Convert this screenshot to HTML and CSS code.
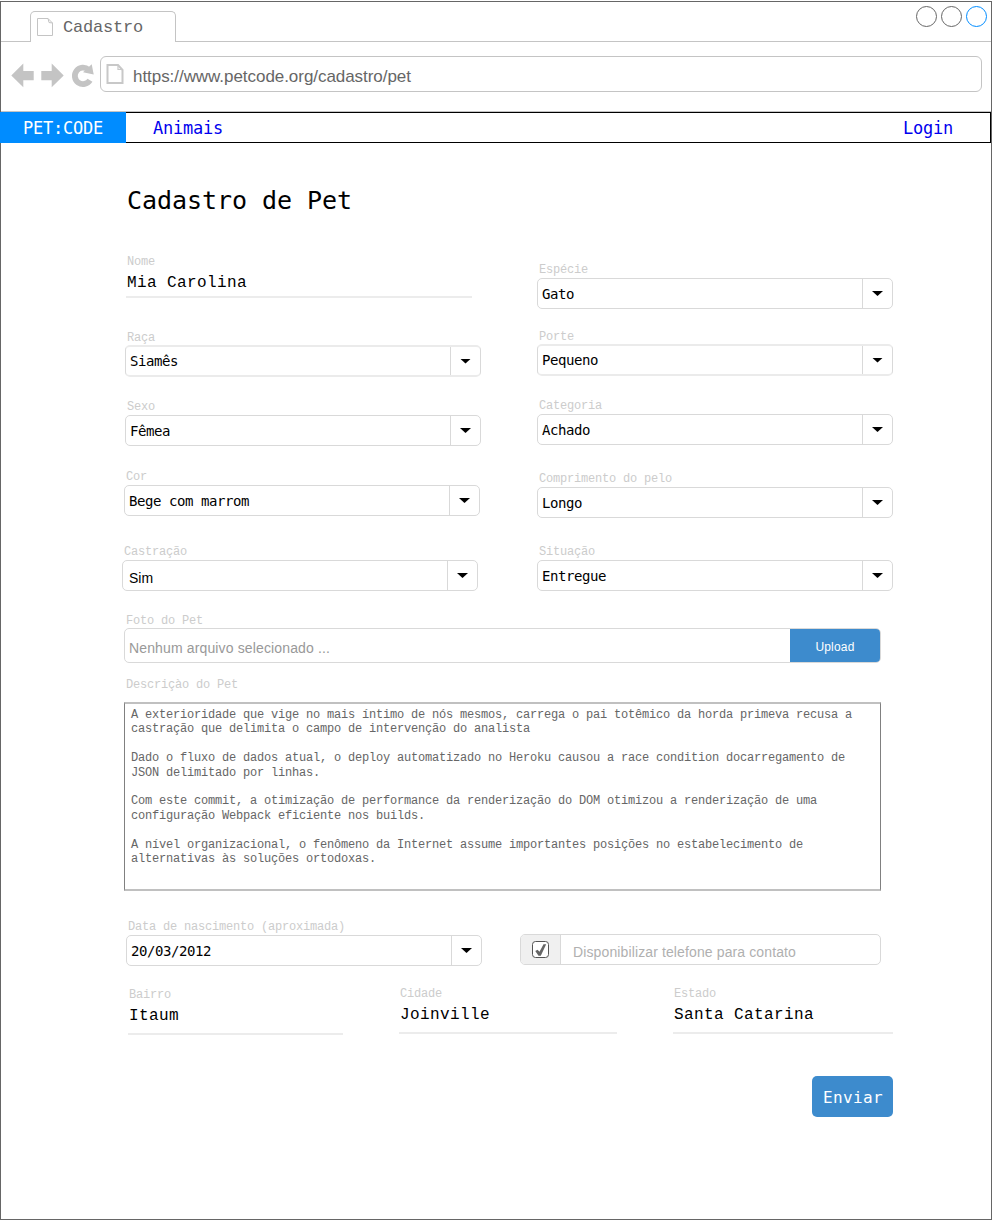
FILE: index.html
```html
<!DOCTYPE html>
<html lang="pt-BR">
<head>
<meta charset="utf-8">
<title>Cadastro</title>
<link rel="stylesheet" href="styles.css">
</head>
<body>
<div class="window">
  <div class="tabbar">
    <div class="tab">
      <svg class="tab-icon" width="18" height="20" viewBox="0 0 18 20"><path d="M1.5 1.5H12L16.500 6V18.500H1.500ZM12 1.500L13 5.500L16.500 6" fill="none" stroke="#c4c4c4"/></svg>
      <span>Cadastro</span>
    </div>
    <svg class="controls" width="76" height="22" viewBox="0 0 76 22" fill="none" stroke="#666">
      <circle cx="11.500" cy="11.500" r="10"/><circle cx="36.500" cy="11.500" r="10"/><circle cx="61.500" cy="11.500" r="10" stroke="#008cff"/>
    </svg>
  </div>
  <div class="toolbar">
    <svg class="nav-icons" width="90" height="28" viewBox="0 0 90 28">
      <path d="M1.300 14.400L13.300 2.400V10H23.700V19.300H13.300V26.300ZM53.700 14.400L41.700 2.400V10H31.300V19.300H41.700V26.300Z" fill="#c4c4c4"/>
      <path d="M80 19.200A8.200 8.200 0 1 1 78.500 8.700" fill="none" stroke="#c4c4c4" stroke-width="5.800"/>
      <path d="M81.700 3.300L83.700 13.400L73 11.200Z" fill="#c4c4c4"/>
    </svg>
    <div class="address">
      <svg width="20" height="22" viewBox="0 0 20 22"><path d="M1.500 2H12L16.500 7V20H1.500Z" fill="none" stroke="#c8c8c8" stroke-width="2"/><path d="M12 2V6.500H16.500" fill="none" stroke="#c8c8c8" stroke-width="1.200"/></svg>
      <span>https://www.petcode.org/cadastro/pet</span>
    </div>
  </div>
  <nav class="navbar">
    <a class="brand">PET:CODE</a>
    <a class="link">Animais</a>
    <a class="link login">Login</a>
  </nav>
  <main class="page">
    <h1 class="title">Cadastro de Pet</h1>
    <div class="columns">
      <div class="column">
        <div class="text-field name"><label>Nome</label><span class="value">Mia Carolina</span></div>
        <div class="field raca"><label>Raça</label><div class="select soft"><span>Siamês</span><i class="arrow"></i></div></div>
        <div class="field sexo"><label>Sexo</label><div class="select"><span>Fêmea</span><i class="arrow"></i></div></div>
        <div class="field cor"><label>Cor</label><div class="select"><span>Bege com marrom</span><i class="arrow"></i></div></div>
        <div class="field castracao"><label>Castração</label><div class="select"><span class="sans">Sim</span><i class="arrow"></i></div></div>
      </div>
      <div class="column right">
        <div class="field especie"><label>Espécie</label><div class="select"><span>Gato</span><i class="arrow"></i></div></div>
        <div class="field porte"><label>Porte</label><div class="select soft"><span>Pequeno</span><i class="arrow"></i></div></div>
        <div class="field categoria"><label>Categoria</label><div class="select"><span>Achado</span><i class="arrow"></i></div></div>
        <div class="field pelo"><label>Comprimento do pelo</label><div class="select"><span>Longo</span><i class="arrow"></i></div></div>
        <div class="field situacao"><label>Situação</label><div class="select"><span>Entregue</span><i class="arrow"></i></div></div>
      </div>
    </div>
    <div class="wide photo">
      <label>Foto do Pet</label>
      <div class="file"><span class="file-name">Nenhum arquivo selecionado ...</span><span class="upload">Upload</span></div>
    </div>
    <div class="wide description">
      <label>Descriçào do Pet</label>
      <div class="textarea">
        <p>A exterioridade que vige no mais íntimo de nós mesmos, carrega o pai totêmico da horda primeva recusa a<br>castração que delimita o campo de intervenção do analista</p>
        <p>Dado o fluxo de dados atual, o deploy automatizado no Heroku causou a race condition docarregamento de<br>JSON delimitado por linhas.</p>
        <p>Com este commit, a otimização de performance da renderização do DOM otimizou a renderização de uma<br>configuração Webpack eficiente nos builds.</p>
        <p>A nível organizacional, o fenômeno da Internet assume importantes posições no estabelecimento de<br>alternativas às soluções ortodoxas.</p>
      </div>
    </div>
    <div class="date-row">
      <div class="field"><label>Data de nascimento (aproximada)</label><div class="select"><span>20/03/2012</span><i class="arrow"></i></div></div>
      <div class="check">
        <span class="check-box"><svg width="18" height="18" viewBox="0 0 18 18"><rect x=".5" y=".5" width="16" height="16" rx="3" fill="#fff" stroke="#555"/><path d="M3.300 10L5.500 8.800L7.500 10.800L11.500 3.300H14.200L8.800 14.800H6.500Z" fill="#666"/></svg></span>
        <span class="check-text">Disponibilizar telefone para contato</span>
      </div>
    </div>
    <div class="place-row">
      <div class="text-field bairro"><label>Bairro</label><span class="value">Itaum</span></div>
      <div class="text-field cidade"><label>Cidade</label><span class="value">Joinville</span></div>
      <div class="text-field estado"><label>Estado</label><span class="value">Santa Catarina</span></div>
    </div>
    <div class="submit">Enviar</div>
  </main>
</div>
</body>
</html>
```

FILE: styles.css
```css
* { box-sizing: border-box; }
body { margin: 0; background: #fff; overflow: hidden; }
.window { width: 992px; height: 1219px; margin-top: 1px; border: 1px solid #666; display: flow-root; }

.tabbar { height: 40px; border-bottom: 1px solid #c4c4c4; display: flex; justify-content: space-between; }
.tab {
  width: 146px; height: 31px; margin: 9px 0 0 29px; padding-left: 5px;
  display: flex; align-items: center; background: #fff;
  border: 1px solid #c4c4c4; border-bottom: 0; border-radius: 5px 5px 0 0;
  font: 17px/20px "Liberation Mono", monospace; letter-spacing: -0.2px; color: #666;
}
.tab span { margin: 2px 0 0 9px; }
.tab-icon { margin-top: 0; }
.controls { margin-top: 3px; }

.toolbar { height: 70px; border-bottom: 1px solid #c4c4c4; display: flex; align-items: flex-start; padding: 14px 9px 0; }
.nav-icons { margin: 5px 0 0; flex: none; }
.address {
  flex: 1; height: 36px; border: 1px solid #c4c4c4; border-radius: 6px; padding-left: 5px;
  display: flex; align-items: center; font: 17px/20px "Liberation Sans", sans-serif; letter-spacing: -0.05px; color: #666;
}
.address span { margin: 6px 0 0 7px; }

.navbar {
  height: 31px; width: 991px; margin-left: -1px; border: 1px solid #000; border-left: 0;
  display: flex; font: 17px/30px "DejaVu Sans Mono", monospace; letter-spacing: -0.235px; color: #00e;
}
.brand { width: 126px; height: 31px; margin-top: -1px; padding: 1px 0 0 23px; background: #008cff; color: #fff; }
.link { margin-left: 27px; }
.login { margin: 0 37px 0 auto; }

.page { padding-top: 43px; }
.title { margin: 0 0 0 126px; font: 25px/29px "DejaVu Sans Mono", monospace; letter-spacing: -0.05px; }
label { display: block; height: 16px; padding-left: 2px; font: 12px/16px "Liberation Mono", monospace; letter-spacing: -0.2px; color: #ccc; white-space: nowrap; }

.columns { display: flex; }
.column { width: 356px; margin-left: 124px; flex: none; }
.column.right { margin-left: 56px; }
.field { width: 356px; }
.select {
  height: 31px; border: 1px solid #d9d9d9; border-radius: 5px; display: flex;
  font: 14px/30px "DejaVu Sans Mono", monospace; letter-spacing: -0.43px; color: #000;
}
.select span { flex: 1; padding-left: 4px; }
.select .sans { padding: 2px 0 0 6px; font: 14px/30px "Liberation Sans", sans-serif; letter-spacing: 0; }
.soft { height: 32px; border-top: 2px solid #ebebeb; border-bottom: 2px solid #ebebeb; }
.soft span { line-height: 28px; }
.arrow { width: 30px; border-left: 1px solid #d9d9d9; display: grid; place-items: center; }
.arrow::after { content: ""; width: 11px; height: 5px; background: #000; clip-path: polygon(0 0, 100% 0, 50% 100%); }

.text-field label { padding-left: 1px; }
.value { display: block; padding-left: 1px; font: 16px/20px "Liberation Mono", monospace; letter-spacing: 0.398px; color: #000; border-bottom: 2px solid #ececec; }
.name { width: 346px; margin: 39px 0 0 1px; }
.name .value { height: 28px; padding-top: 3px; }
.raca { margin-top: 32px; }
.raca label, .porte label { height: 15px; }
.sexo { margin-top: 22px; }
.cor { margin: 23px 0 0 -1px; }
.castracao { margin: 28px 0 0 -3px; }
.especie { margin-top: 47px; }
.porte { margin-top: 20px; }
.categoria { margin-top: 22px; }
.pelo { margin-top: 26px; }
.situacao { margin-top: 26px; }

.wide { width: 758px; margin-left: 123px; }
.wide label { height: 15px; }
.photo { margin-top: 22px; }
.file {
  width: 757px; height: 35px; border: 1px solid #d9d9d9; border-radius: 5px; overflow: hidden;
  display: flex; justify-content: space-between; font: 14px/38px "Liberation Sans", sans-serif; letter-spacing: 0.14px; color: #999;
}
.file-name { padding-left: 4px; }
.upload { width: 90px; background: #3d8bcd; color: #fff; text-align: center; font-size: 12px; line-height: 36px; letter-spacing: 0.2px; }
.description { margin-top: 14px; }
.textarea {
  width: 757px; height: 189px; margin-top: 10px; padding: 4px 6px;
  border: solid; border-width: 2px 1px; border-color: #c0c0c0 #808080;
  font: 12px/14.4px "Liberation Mono", monospace; letter-spacing: -0.2px; color: #666; white-space: nowrap;
}
.textarea p { margin: 0 0 14.4px; }

.date-row { display: flex; margin: 28px 0 0 125px; }
.check {
  width: 361px; height: 31px; margin: 15px 0 0 38px; border: 1px solid #d9d9d9; border-radius: 5px; overflow: hidden;
  display: flex; font: 14px/34px "Liberation Sans", sans-serif; letter-spacing: 0.12px; color: #b0b0b0;
}
.check-box { width: 40px; background: #f0f0f0; border-right: 1px solid #d9d9d9; padding: 6px 0 0 11px; line-height: 0; }
.check-text { padding-left: 12px; }

.place-row { display: flex; margin: 20px 0 0 127px; }
.place-row .value { height: 32px; padding-top: 3px; }
.bairro { width: 215px; margin-top: 1px; }
.cidade { width: 218px; margin-left: 56px; }
.estado { width: 220px; margin-left: 56px; }
.submit {
  width: 81px; height: 41px; margin: 41px 0 0 811px; padding-left: 11px; border-radius: 5px; background: #3d8bcd;
  font: 16px/43px "DejaVu Sans Mono", monospace; letter-spacing: 0.367px; color: #fff;
}
```
